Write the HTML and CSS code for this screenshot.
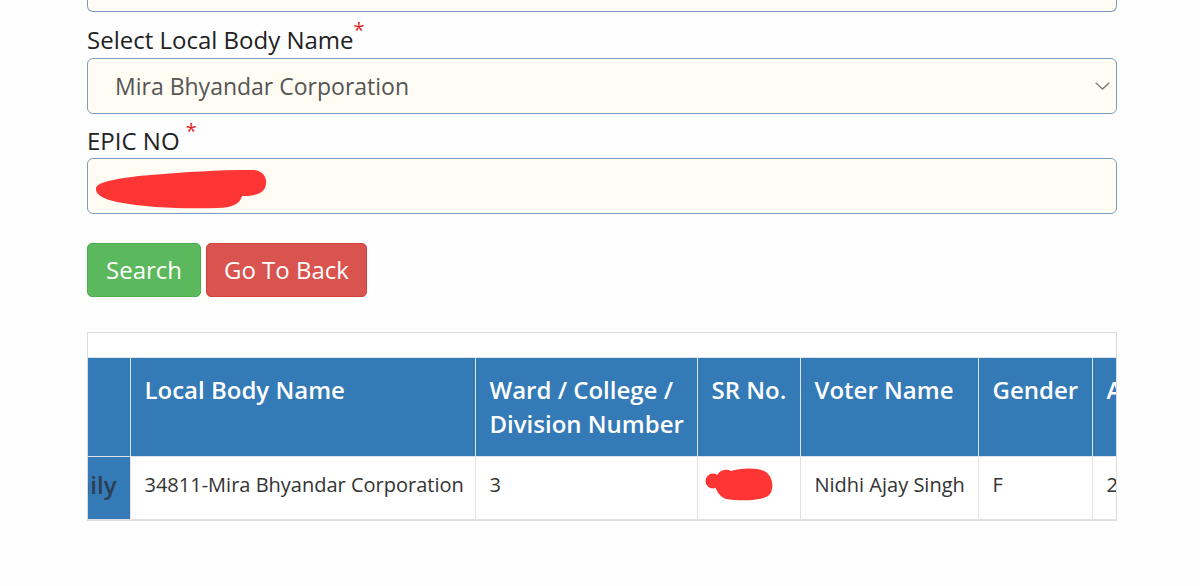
FILE: index.html
```html
<!DOCTYPE html>
<html lang="en">
<head>
<meta charset="utf-8">
<title>Voter Search</title>
<link rel="stylesheet" href="styles.css">
</head>
<body>
<div class="page">
  <div class="field-stub"></div>

  <div class="form-group first">
    <label class="label">Select Local Body Name<span class="req">*</span></label>
    <div class="form-control select">
      <span class="select-text">Mira Bhyandar Corporation</span>
      <svg class="chevron" width="15" height="8" viewBox="0 0 15 8"><polyline points="0.7,0.7 7.5,7 14.3,0.7" fill="none" stroke="#7a7a7a" stroke-width="1.3"/></svg>
    </div>
  </div>

  <div class="form-group">
    <label class="label">EPIC NO <span class="req">*</span></label>
    <div class="form-control input">
      <svg class="scribble" width="200" height="56" viewBox="0 0 200 56"><path d="M9,30 C10,23 40,19 63,17 C100,14 130,12 165,12 C176,12 180,20 179,26 C178,34 172,37 160,38 L155,38 C153,46 145,50 130,50 C100,51 60,50 30,44 C15,41 8,36 9,30 Z" fill="#fd3535"/></svg>
    </div>
  </div>

  <div class="actions">
    <button class="btn btn-success">Search</button>
    <button class="btn btn-danger">Go To Back</button>
  </div>

  <div class="table-wrap">
    <div class="table-spacer"></div>
    <table class="result">
      <colgroup>
        <col class="c1"><col class="c2"><col class="c3"><col class="c4"><col class="c5"><col class="c6"><col class="c7">
      </colgroup>
      <thead>
        <tr>
          <th class="cut"><div class="clip">Family</div></th>
          <th>Local Body Name</th>
          <th>Ward / College /<br>Division Number</th>
          <th>SR No.</th>
          <th>Voter Name</th>
          <th>Gender</th>
          <th>Age</th>
        </tr>
      </thead>
      <tbody>
        <tr>
          <th class="cut body-cut"><div class="clip">Family</div></th>
          <td>34811-Mira Bhyandar Corporation</td>
          <td>3</td>
          <td class="sr"><svg class="scribble-sr" width="80" height="50" viewBox="0 0 80 50"><circle cx="15" cy="24" r="7.5" fill="#fd3535"/><path d="M18,20 C21,13 28,11 33,14 C42,11 60,10 68,15 C76,21 77,36 68,40 C58,44 40,44 28,42 C22,40 18,34 17,28 Z" fill="#fd3535"/></svg></td>
          <td>Nidhi Ajay Singh</td>
          <td>F</td>
          <td>2</td>
        </tr>
      </tbody>
    </table>
  </div>
</div>
</body>
</html>
```
FILE: styles.css
```css
html, body {
  margin: 0;
  padding: 0;
  background: #fefefe;
}

body {
  font-family: "Open Sans", "DejaVu Sans", sans-serif;
  font-size: 24px;
  color: #333;
}

.page {
  width: 1030px;
  padding-left: 87px;
}

.field-stub {
  height: 11px;
  background: #fffcf4;
  border: 1px solid #7b9bbf;
  border-top: none;
  border-radius: 0 0 6px 6px;
}

.form-group {
  margin-top: 11px;
}

.form-group.first {
  margin-top: 12px;
}

.label {
  display: block;
  line-height: 32px;
  margin-bottom: 1px;
  color: #222;
  white-space: nowrap;
}

.form-group.first .label {
  margin-bottom: 2px;
}

.req {
  color: #e0262b;
  font-size: 20px;
  vertical-align: 12px;
  line-height: 0;
}

.form-control {
  box-sizing: border-box;
  height: 56px;
  background: #fffcf4;
  border: 1px solid #7b9bbf;
  border-radius: 6px;
}

.select {
  display: flex;
  align-items: center;
  justify-content: space-between;
  padding: 0 6px 0 27px;
}

.select-text {
  color: #555;
  font-size: 23px;
  line-height: 34px;
}

.chevron {
  display: block;
}

.input {
  position: relative;
}

.scribble {
  position: absolute;
  left: -1px;
  top: -1px;
}

.actions {
  display: flex;
  gap: 5px;
  margin-top: 29px;
}

.btn {
  font-family: inherit;
  font-size: 24px;
  line-height: 34px;
  padding: 9px 17px;
  border-radius: 5px;
  color: #fff;
  cursor: pointer;
}

.btn-success {
  background: #5cb85c;
  border: 1px solid #4cae4c;
  padding-left: 18px;
  padding-right: 18px;
}

.btn-danger {
  background: #d9534f;
  border: 1px solid #d43f3a;
}

.table-wrap {
  margin-top: 35px;
  border: 1px solid #ddd;
  overflow: hidden;
  background: #fff;
}

.table-spacer {
  height: 24px;
}

.result {
  border-collapse: collapse;
  table-layout: fixed;
  width: 1125px;
}

.c1 { width: 42px; }
.c2 { width: 345px; }
.c3 { width: 222px; }
.c4 { width: 103px; }
.c5 { width: 178px; }
.c6 { width: 114px; }
.c7 { width: 121px; }

.result th,
.result td {
  border: 1px solid #dde3ea;
  text-align: left;
  vertical-align: top;
  line-height: 34px;
}

.result thead th {
  background: #337ab7;
  color: #fff;
  font-weight: 600;
  padding: 15px 14px;
  white-space: nowrap;
}

.result thead th:first-child,
.result tbody th:first-child {
  border-left: none;
}

.result thead th.cut .clip {
  visibility: hidden;
}

.result td {
  padding: 11px 14px 17px;
  background: #fff;
  color: #333;
  font-size: 20px;
  white-space: nowrap;
  border-color: #e2e2e2;
}

.result tbody th.body-cut {
  background: #337ab7;
  color: #2d3e52;
  font-weight: 600;
  padding: 11px 13px 17px 0;
  border-color: #e2e2e2;
}

.clip {
  display: flex;
  justify-content: flex-end;
  overflow: hidden;
  white-space: nowrap;
}

.sr {
  position: relative;
}

.scribble-sr {
  position: absolute;
  left: 0;
  top: 0;
}
```
